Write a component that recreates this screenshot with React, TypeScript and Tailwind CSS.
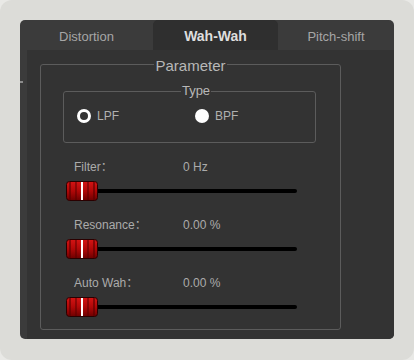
import { useState } from 'react'

const FONT = { fontFamily: '"Liberation Sans", "Noto Sans CJK SC", sans-serif' }

const tabs = [
  { label: 'Distortion', w: 'w-[133px]' },
  { label: 'Wah-Wah', w: 'w-[125px]' },
  { label: 'Pitch-shift', w: 'flex-1' },
]

function Thumb() {
  return (
    <svg width="32" height="20" viewBox="0 0 32 20" className="block shrink-0">
      <defs>
        <linearGradient id="thumbFill" x1="0" y1="0" x2="0" y2="1">
          <stop offset="0" stopColor="#d41414" />
          <stop offset="0.5" stopColor="#b00808" />
          <stop offset="1" stopColor="#6e0000" />
        </linearGradient>
      </defs>
      <rect x="0.5" y="0.5" width="31" height="19" rx="3" fill="url(#thumbFill)" stroke="#2a0000" />
      <rect x="3" y="1" width="2" height="18" fill="#5a0000" opacity="0.6" />
      <rect x="9" y="1" width="2" height="18" fill="#5a0000" opacity="0.5" />
      <rect x="21" y="1" width="2" height="18" fill="#5a0000" opacity="0.5" />
      <rect x="27" y="1" width="2" height="18" fill="#5a0000" opacity="0.6" />
      <rect x="15" y="1" width="2" height="18" fill="#ffffff" />
    </svg>
  )
}

function SliderRow({ label, value }: { label: string; value: string }) {
  return (
    <div className="mt-[17px]">
      <div className="ml-[33px] flex h-[14px] items-center text-[12px] leading-[14px] text-[#ababab]">
        <span className="w-[109px]">{label}</span>
        <span>{value}</span>
      </div>
      <div className="ml-[25px] mt-[7px] flex h-[20px] w-[231px] items-center">
        <Thumb />
        <div className="h-[4px] flex-1 rounded-r-full bg-black" />
      </div>
    </div>
  )
}

export default function App() {
  const [active, setActive] = useState(1)
  const [type, setType] = useState<'LPF' | 'BPF'>('BPF')

  return (
    <div className="h-[360px] w-[414px] bg-[#e9e9e6]" style={FONT}>
      <div className="h-full w-full rounded-[12px] bg-[#dcdcd8] px-[20px] pt-[20px]">
        <div className="flex h-[319px] flex-col overflow-hidden rounded-[5px] bg-[#3b3b3b]">
          {/* Tabs */}
          <div className="flex h-[30px] shrink-0">
            {tabs.map((t, i) => (
              <button
                key={t.label}
                onClick={() => setActive(i)}
                className={`${t.w} flex items-center justify-center pt-[3px] ${
                  i === active
                    ? 'rounded-t-[5px] bg-[#2f2f2f] text-[14px] font-bold text-[#dedede]'
                    : 'text-[13px] text-[#a6a6a6]'
                }`}
              >
                {t.label}
              </button>
            ))}
          </div>

          {/* Pane */}
          <div className="flex flex-1">
            <div className="w-[7px] shrink-0">
              <div className="mt-[31px] h-[2px] w-[3px] bg-[#8c8c8c]" />
            </div>
            <div className="flex-1 bg-[#333333] pl-[13px] pt-[4px]">
              <fieldset className="w-[301px] rounded-[3px] border border-[#5c5c5c] px-0 pb-[12px] pt-[10px]">
                <legend className="mx-auto px-[1px] pt-[4px] text-[15px] leading-[16px] text-[#b8b8b8]">Parameter</legend>

                <fieldset className="ml-[22px] w-[253px] rounded-[3px] border border-[#5c5c5c] pb-[19px] pl-[13px] pt-[11px]">
                  <legend className="mx-auto px-[1px] text-[13px] leading-[14px] text-[#b8b8b8]">Type</legend>
                  <div className="flex h-[14px] items-center text-[12px] text-[#b0b0b0]">
                    {(['LPF', 'BPF'] as const).map((v) => (
                      <button key={v} onClick={() => setType(v)} className="flex w-[118px] items-center gap-[6px]">
                        <span
                          className={`block h-[14px] w-[14px] rounded-full ${
                            type === v ? 'bg-white' : 'border-[3px] border-white bg-[#333333]'
                          }`}
                        />
                        {v}
                      </button>
                    ))}
                  </div>
                </fieldset>

                <SliderRow label="Filter：" value="0 Hz" />
                <SliderRow label="Resonance：" value="0.00 %" />
                <SliderRow label="Auto Wah：" value="0.00 %" />
              </fieldset>
            </div>
          </div>
        </div>
      </div>
    </div>
  )
}
